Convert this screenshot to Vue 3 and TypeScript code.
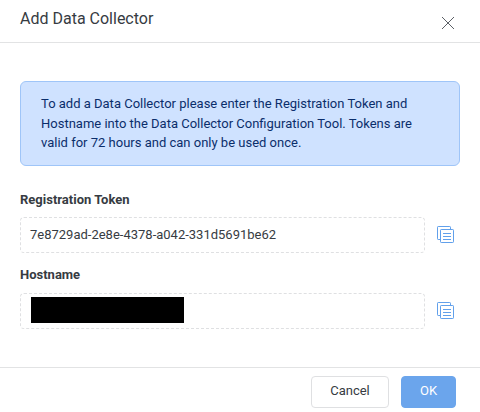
<script setup lang="ts">
interface Field {
  label: string
  value: string
  masked: boolean
}

const fields: Field[] = [
  { label: 'Registration Token', value: '7e8729ad-2e8e-4378-a042-331d5691be62', masked: false },
  { label: 'Hostname', value: '', masked: true },
]
</script>

<template>
  <section class="dialog" role="dialog" aria-labelledby="dialog-title">
    <header class="header">
      <h1 id="dialog-title" class="title">Add Data Collector</h1>
      <button class="close" type="button">
        <svg width="12" height="12" viewBox="0 0 12 12" fill="none" stroke="#5c6066" stroke-width="1">
          <path d="M0 0 12 12M12 0 0 12" />
        </svg>
      </button>
    </header>

    <div class="body">
      <p class="notice">To add a Data Collector please enter the Registration Token and Hostname into the Data Collector Configuration Tool. Tokens are valid for 72 hours and can only be used once.</p>

      <div v-for="field in fields" :key="field.label" class="field">
        <div class="label">{{ field.label }}</div>
        <div class="row">
          <div class="value">
            <span v-if="field.masked" class="mask"></span>
            <span v-else>{{ field.value }}</span>
          </div>
          <button class="copy" type="button">
            <svg width="17" height="17" viewBox="0 0 17 17" fill="none" stroke="#61a0eb" stroke-width="1">
              <path d="M3 13.5H1.2a.7.7 0 0 1-.7-.7V1.2a.7.7 0 0 1 .7-.7h11.6a.7.7 0 0 1 .7.7V3" />
              <rect x="3.5" y="3.5" width="13" height="13" rx=".7" />
              <path d="M6 7.5h8M6 10.5h8M6 13.5h8" />
            </svg>
          </button>
        </div>
      </div>
    </div>

    <footer class="footer">
      <button class="btn" type="button">Cancel</button>
      <button class="btn primary" type="button">OK</button>
    </footer>
  </section>
</template>

<style>
body {
  background: #fff;
}
</style>

<style scoped>
.dialog {
  box-sizing: border-box;
  display: flex;
  flex-direction: column;
  width: 480px;
  height: 412px;
  background: #fff;
  color: #363b42;
  font: 13px/19.5px Roboto, sans-serif;
}

button {
  margin: 0;
  padding: 0;
  border: 0;
  background: none;
  color: inherit;
  font: inherit;
}

svg {
  display: block;
}

.header {
  box-sizing: border-box;
  display: flex;
  justify-content: space-between;
  height: 43px;
  padding: 7px 26px 0 20px;
  border-bottom: 1px solid #e2e3e4;
}

.title {
  margin: 0;
  font-size: 16px;
  font-weight: 400;
  line-height: 24px;
}

.close {
  align-self: flex-start;
  margin-top: 10px;
}

.body {
  flex: 1;
  padding: 38px 20px 0;
}

.notice {
  box-sizing: border-box;
  height: 85px;
  margin: 0 0 24px;
  padding: 12px 20px;
  border: 1px solid #9fc5f8;
  border-radius: 6px;
  background: #cfe2ff;
  color: #0b2e6b;
}

.field {
  height: 75px;
}

.label {
  height: 27px;
  font-weight: 700;
}

.field + .field .label {
  height: 28px;
}

.row {
  display: flex;
  align-items: center;
  gap: 12px;
}

.value {
  box-sizing: border-box;
  display: flex;
  align-items: center;
  width: 405px;
  height: 36px;
  padding-left: 9px;
  border: 1px dashed #dfe0e2;
  border-radius: 4px;
}

.copy {
  margin-bottom: 2px;
}

.mask {
  width: 153px;
  height: 26px;
  margin: 0 0 2px 1px;
  background: #000;
}

.footer {
  box-sizing: border-box;
  display: flex;
  justify-content: flex-end;
  gap: 12px;
  height: 45px;
  padding: 8px 24px 0 0;
  border-top: 1px solid #e2e3e4;
}

.btn {
  box-sizing: border-box;
  width: 78px;
  height: 32px;
  padding-bottom: 2px;
  border: 1px solid #dfe0e2;
  border-radius: 4px;
}

.primary {
  width: 55px;
  border-color: #6ba5ec;
  background: #6ba5ec;
  color: #fff;
}
</style>
